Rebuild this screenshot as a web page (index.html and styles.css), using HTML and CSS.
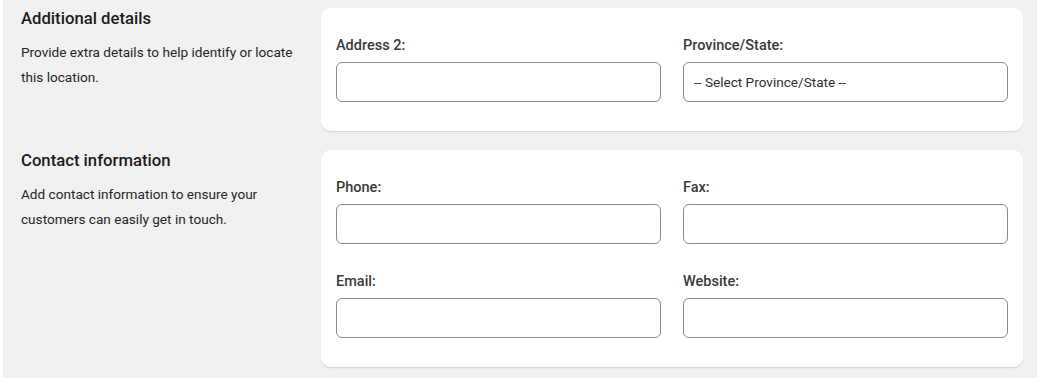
FILE: index.html
```html
<!DOCTYPE html>
<html lang="en">
<head>
<meta charset="utf-8">
<title>Location details</title>
<link rel="stylesheet" href="styles.css">
</head>
<body>
<div class="page">
  <section class="section">
    <div class="intro">
      <h2 class="intro-title">Additional details</h2>
      <p class="intro-text">Provide extra details to help identify or locate this location.</p>
    </div>
    <div class="card">
      <div class="grid">
        <div class="field">
          <label class="label" for="address2">Address 2:</label>
          <input class="input" id="address2" type="text">
        </div>
        <div class="field">
          <label class="label" for="province">Province/State:</label>
          <select class="input select" id="province">
            <option>-- Select Province/State --</option>
          </select>
        </div>
      </div>
    </div>
  </section>
  <section class="section">
    <div class="intro">
      <h2 class="intro-title">Contact information</h2>
      <p class="intro-text">Add contact information to ensure your customers can easily get in touch.</p>
    </div>
    <div class="card">
      <div class="grid">
        <div class="field">
          <label class="label" for="phone">Phone:</label>
          <input class="input" id="phone" type="text">
        </div>
        <div class="field">
          <label class="label" for="fax">Fax:</label>
          <input class="input" id="fax" type="text">
        </div>
        <div class="field">
          <label class="label" for="email">Email:</label>
          <input class="input" id="email" type="text">
        </div>
        <div class="field">
          <label class="label" for="website">Website:</label>
          <input class="input" id="website" type="text">
        </div>
      </div>
    </div>
  </section>
</div>
</body>
</html>
```

FILE: styles.css
```css
* { box-sizing: border-box; }

html, body {
  margin: 0;
  padding: 0;
  background: #ffffff;
}

body {
  font-family: Roboto, "Liberation Sans", Arial, sans-serif;
  color: #1a1a1a;
  padding: 0 2px 1px 3px;
}

.page {
  background: #f1f1f1;
  height: 378px;
  padding: 8px 14px 0 18px;
  display: flex;
  flex-direction: column;
  gap: 19px;
}

.section {
  display: flex;
  gap: 20px;
  align-items: flex-start;
}

.intro {
  width: 280px;
  flex: none;
}

.intro-title {
  margin: 0;
  font-size: 16.7px;
  line-height: 22px;
  font-weight: 500;
  color: #1c1c1c;
}

.intro-text {
  margin: 10px 0 0;
  font-size: 13.6px;
  line-height: 25px;
  color: #262626;
}

.card {
  flex: 1;
  background: #ffffff;
  border-radius: 10px;
  padding: 29px 15px 29px;
  box-shadow: 0 1px 0 rgba(0, 0, 0, 0.07), 0 2px 2px rgba(0, 0, 0, 0.04);
}

.grid {
  display: grid;
  grid-template-columns: 1fr 1fr;
  column-gap: 22px;
  row-gap: 29px;
}

.field {
  display: flex;
  flex-direction: column;
}

.label {
  font-size: 14.5px;
  line-height: 17px;
  font-weight: 500;
  color: #3a3a3a;
  margin-bottom: 8px;
}

.input {
  display: block;
  width: 100%;
  height: 40px;
  margin: 0;
  border: 1px solid #8a8a8a;
  border-radius: 6px;
  background: #ffffff;
  font-family: Roboto, "Liberation Sans", Arial, sans-serif;
  font-size: 13.6px;
  color: #303030;
  padding: 0 10px;
  outline: none;
}

.select {
  appearance: none;
  -webkit-appearance: none;
}
```
